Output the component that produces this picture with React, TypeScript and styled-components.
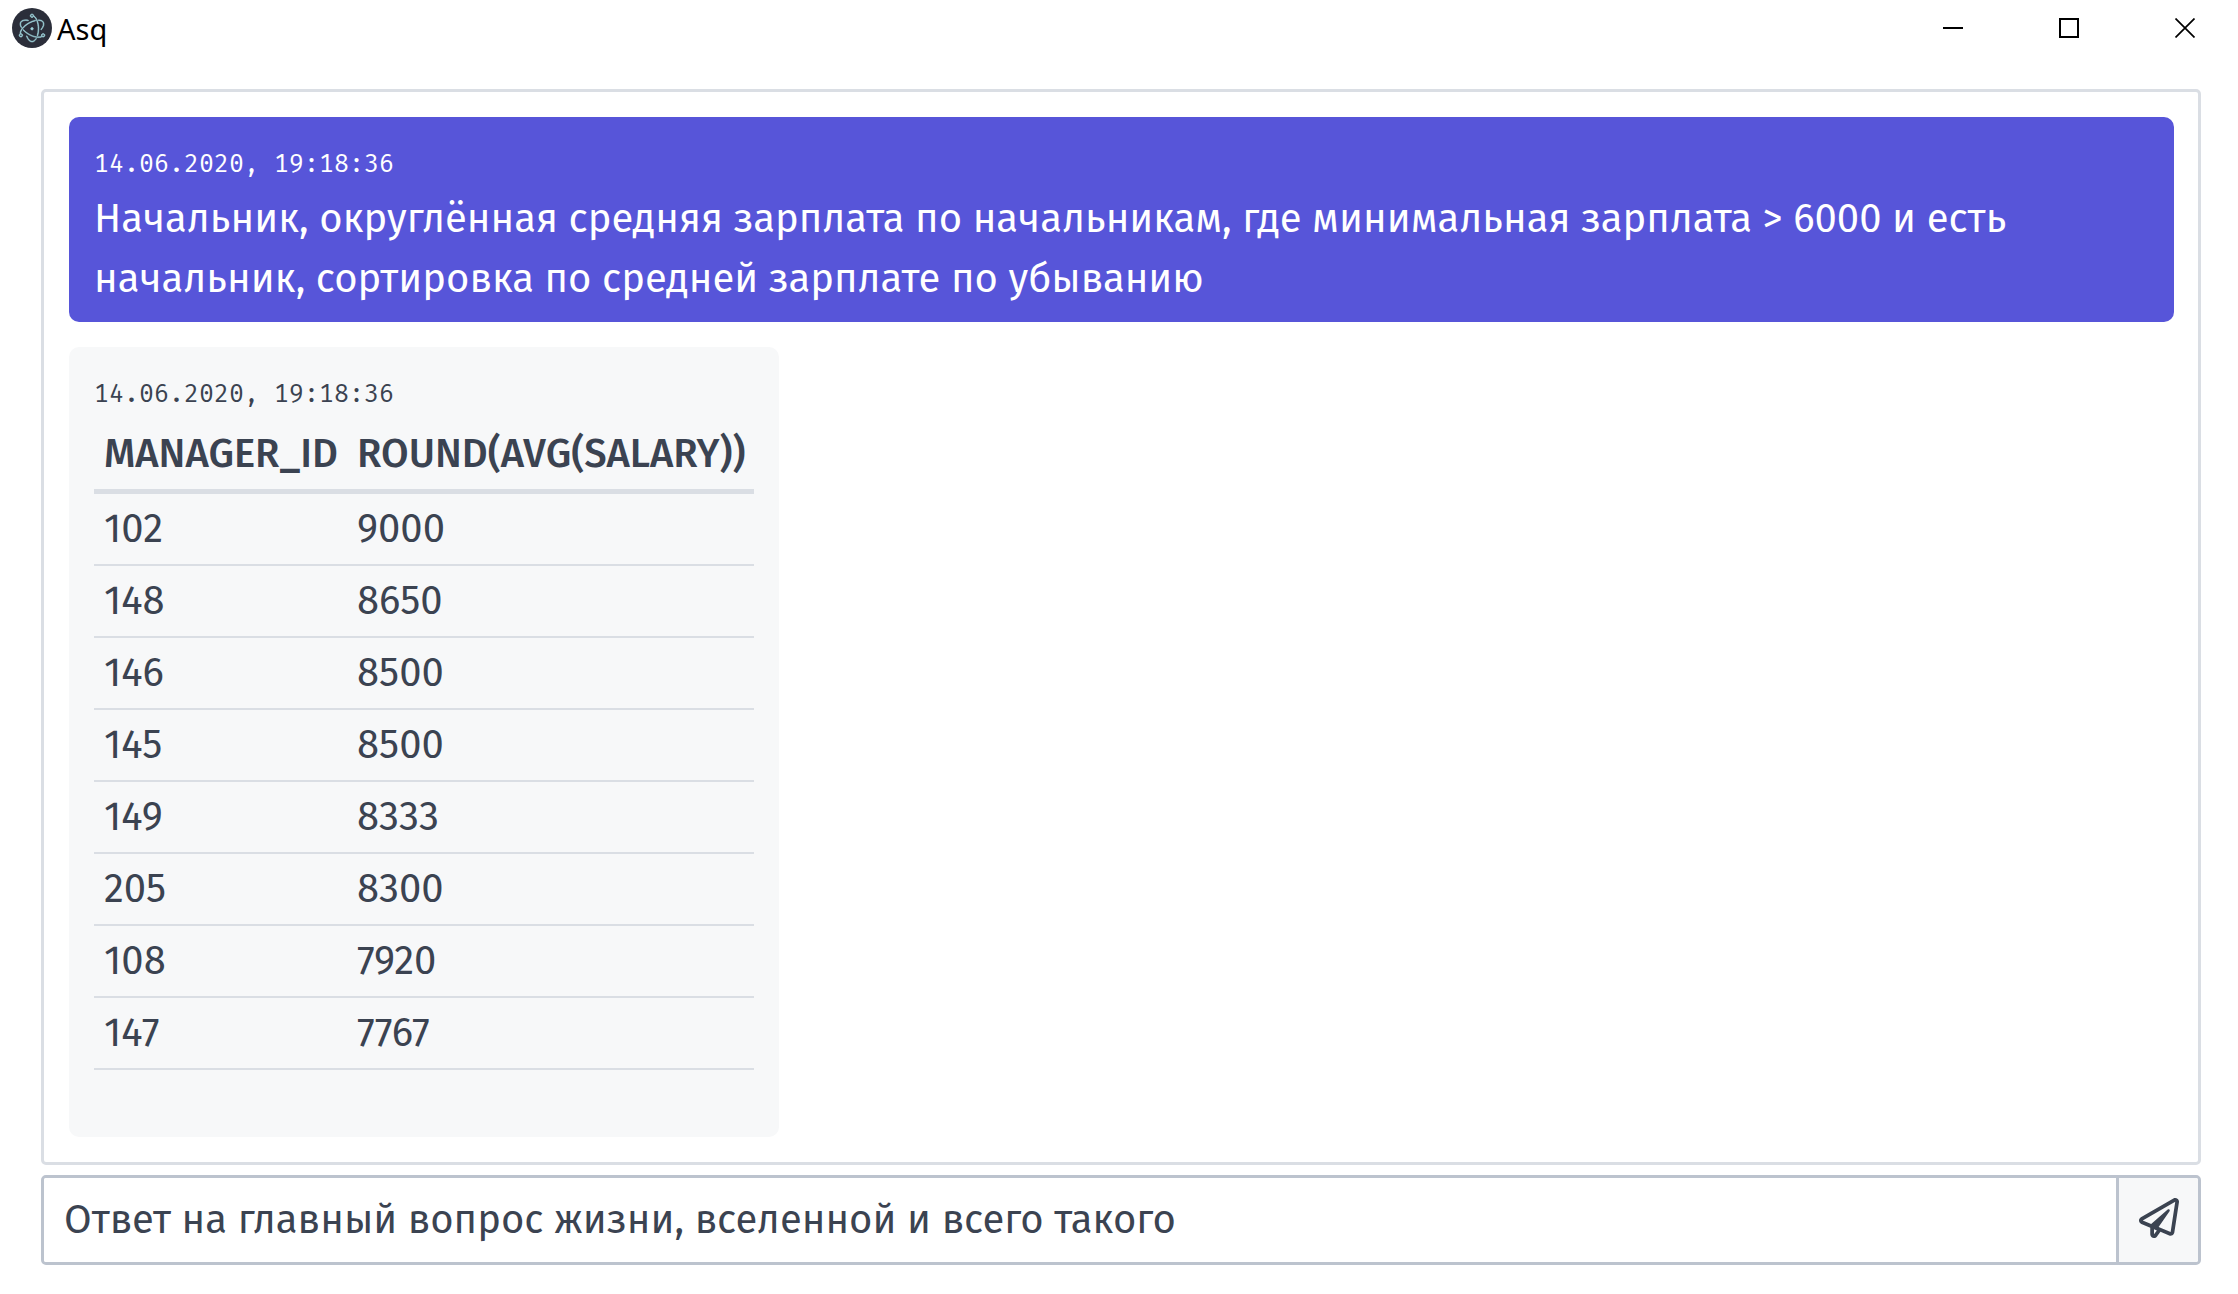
import React, { useState } from 'react';
import styled, { createGlobalStyle } from 'styled-components';
import { SiElectron } from 'react-icons/si';

const colors = {
  primary: '#5755d9',
  text: '#3b4351',
  border: '#dadee4',
  inputBorder: '#bcc3ce',
  surface: '#f7f8f9',
};

const GlobalStyle = createGlobalStyle`
  *, *::before, *::after { box-sizing: border-box; }
  html, body, #root { height: 100%; }
  body {
    margin: 0;
    background: #fff;
    color: ${colors.text};
    font: 400 40px/60px "Fira Sans", Roboto, "Noto Sans", sans-serif;
  }
`;

const Window = styled.div`
  min-height: 100%;
  display: flex;
  flex-direction: column;
`;

const TitleBar = styled.header`
  display: flex;
  align-items: center;
  gap: 10px;
  height: 56px;
  padding-left: 12px;
`;

const AppIcon = styled.span`
  display: flex;
  align-items: center;
  justify-content: center;
  width: 40px;
  height: 40px;
  border-radius: 50%;
  background: #2b2e3a;
  color: #9fd3da;

  svg {
    width: 28px;
    height: 28px;
    overflow: visible;
    stroke: currentColor;
    stroke-width: 0.5px;
  }
`;

const Brand = styled.div`
  display: flex;
  align-items: center;
  gap: 5px;
  margin-right: auto;
`;

const Title = styled.h1`
  margin: 0;
  padding-top: 2px;
  color: #000;
  font: 400 29px/40px "Segoe UI", "Noto Sans", sans-serif;
`;

const WindowButton = styled.button`
  display: flex;
  align-items: center;
  justify-content: center;
  width: 106px;
  height: 56px;
  padding: 0;
  border: 0;
  background: none;
  color: #000;

  svg { width: 20px; height: 20px; }
`;

const Main = styled.main`
  flex: 1;
  display: flex;
  flex-direction: column;
  gap: 10px;
  padding: 33px 37px 29px 41px;
`;

const Messages = styled.section`
  flex: 1;
  display: flex;
  flex-direction: column;
  align-items: flex-start;
  gap: 25px;
  padding: 25px 24px 25px 25px;
  border: 3px solid ${colors.border};
  border-radius: 5px;
`;

const Message = styled.article<{ $own?: boolean }>`
  width: ${p => (p.$own ? '100%' : 'auto')};
  padding: 24px 25px 13px;
  border-radius: 10px;
  background: ${p => (p.$own ? colors.primary : colors.surface)};
  color: ${p => (p.$own ? '#fff' : 'inherit')};
`;

const Time = styled.time`
  display: block;
  margin-bottom: 2px;
  font: 400 25px/46px "Fira Mono", "Liberation Mono", monospace;
`;

const Text = styled.p`
  margin: 0;
`;

const Table = styled.table`
  margin-bottom: 54px;
  border-collapse: separate;
  border-spacing: 0;
  text-align: left;
`;

const HeadCell = styled.th`
  height: 75px;
  padding: 0 9px 0 10px;
  border-bottom: 5px solid ${colors.border};
  font-weight: 500;

  &:first-child { width: 253px; }
`;

const Cell = styled.td`
  height: 72px;
  padding: 0 9px 0 10px;
  border-bottom: 2px solid ${colors.border};
`;

const Composer = styled.form`
  display: flex;
  height: 90px;
  border: 3px solid ${colors.inputBorder};
  border-radius: 5px;
  overflow: hidden;
`;

const Input = styled.input`
  flex: 1;
  min-width: 0;
  padding: 0 20px;
  border: 0;
  outline: 0;
  background: #fff;
  color: inherit;
  font: inherit;
`;

const SendButton = styled.button`
  display: flex;
  align-items: center;
  justify-content: center;
  width: 82px;
  padding: 0 0 4px;
  border: 0;
  border-left: 3px solid ${colors.inputBorder};
  background: ${colors.surface};
  color: ${colors.text};

  svg { width: 40px; height: 40px; }
`;

const rows = [
  [102, 9000],
  [148, 8650],
  [146, 8500],
  [145, 8500],
  [149, 8333],
  [205, 8300],
  [108, 7920],
  [147, 7767],
];

function SendIcon() {
  return (
    <svg viewBox="0 0 512 512" fill="currentColor" aria-hidden="true">
      <path d="M440 6.500L24 246.400c-34.400 19.900-31.100 70.800 5.700 85.900L144 379.600V464c0 46.400 59.200 65.500 86.600 28.600l43.800-59.100 111.900 46.200c5.900 2.400 12.100 3.600 18.300 3.600 8.200 0 16.300-2.100 23.600-6.200 12.800-7.200 21.600-20 23.900-34.500l59.400-387.200c6.100-40.100-36.900-68.800-71.500-48.900zM192 464v-64.600l36.600 15.100L192 464zm212.600-28.700l-153.800-63.500L391 169.500c10.700-15.500-9.500-33.500-23.700-21.200L155.800 332.600 48 288 464 48l-59.400 387.300z" />
    </svg>
  );
}

export default function App() {
  const [query, setQuery] = useState('Ответ на главный вопрос жизни, вселенной и всего такого');

  return (
    <>
      <GlobalStyle />
      <Window>
        <TitleBar>
          <Brand>
            <AppIcon>
              <SiElectron aria-hidden="true" />
            </AppIcon>
            <Title>Asq</Title>
          </Brand>
          <WindowButton type="button" aria-label="Свернуть">
            <svg viewBox="0 0 20 20"><path d="M0 10h20" stroke="currentColor" strokeWidth="2" /></svg>
          </WindowButton>
          <WindowButton type="button" aria-label="Развернуть">
            <svg viewBox="0 0 20 20"><path d="M1 1h18v18H1z" fill="none" stroke="currentColor" strokeWidth="2" /></svg>
          </WindowButton>
          <WindowButton type="button" aria-label="Закрыть">
            <svg viewBox="0 0 20 20"><path d="M.5 .5l19 19M19.500 .5l-19 19" stroke="currentColor" strokeWidth="1.700" /></svg>
          </WindowButton>
        </TitleBar>
        <Main>
          <Messages>
            <Message $own>
              <Time dateTime="2020-06-14T19:18:36">14.06.2020, 19:18:36</Time>
              <Text>
                Начальник, округлённая средняя зарплата по начальникам, где минимальная зарплата &gt; 6000 и есть
                начальник, сортировка по средней зарплате по убыванию
              </Text>
            </Message>
            <Message>
              <Time dateTime="2020-06-14T19:18:36">14.06.2020, 19:18:36</Time>
              <Table>
                <thead>
                  <tr>
                    <HeadCell scope="col">MANAGER_ID</HeadCell>
                    <HeadCell scope="col">ROUND(AVG(SALARY))</HeadCell>
                  </tr>
                </thead>
                <tbody>
                  {rows.map(([id, salary]) => (
                    <tr key={id}>
                      <Cell>{id}</Cell>
                      <Cell>{salary}</Cell>
                    </tr>
                  ))}
                </tbody>
              </Table>
            </Message>
          </Messages>
          <Composer onSubmit={e => e.preventDefault()}>
            <Input aria-label="Запрос" value={query} onChange={e => setQuery(e.target.value)} />
            <SendButton type="submit" aria-label="Отправить">
              <SendIcon />
            </SendButton>
          </Composer>
        </Main>
      </Window>
    </>
  );
}
